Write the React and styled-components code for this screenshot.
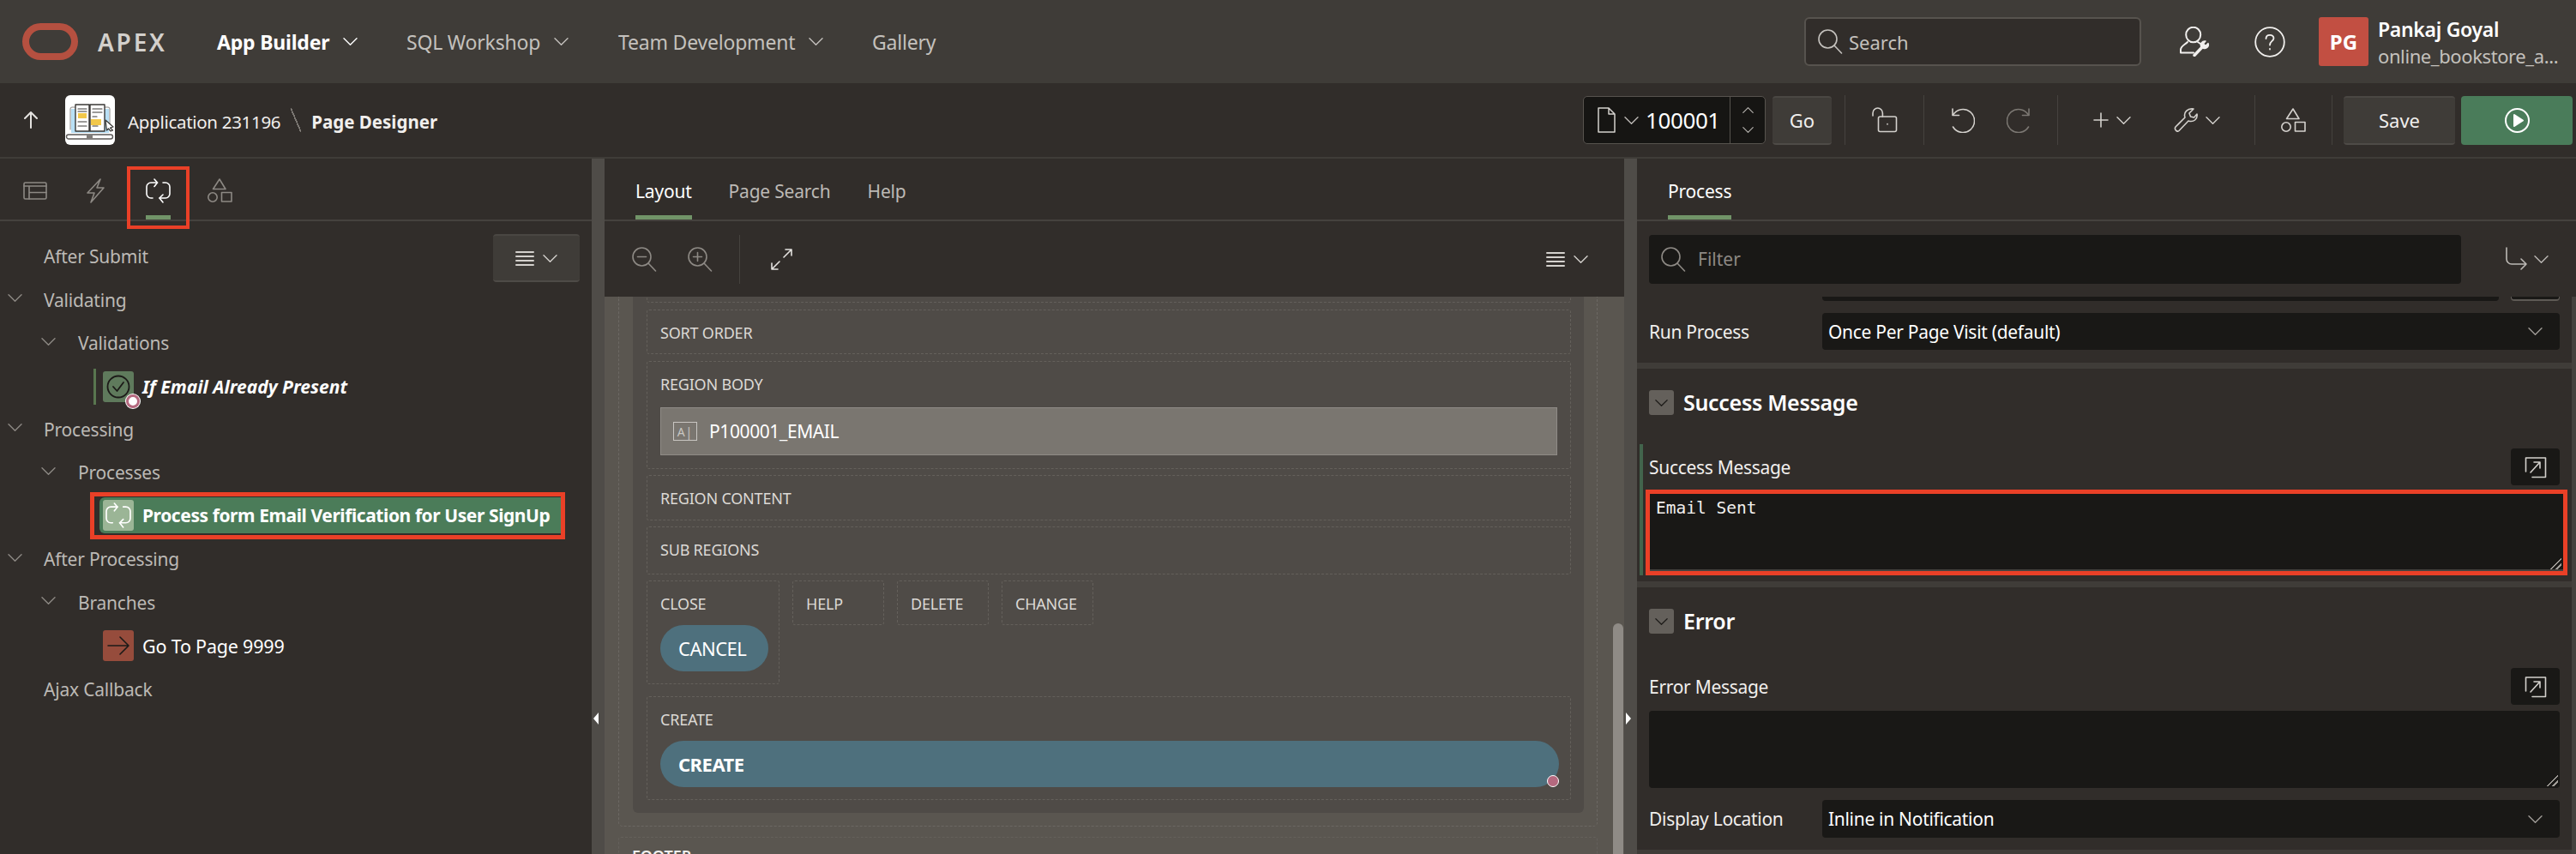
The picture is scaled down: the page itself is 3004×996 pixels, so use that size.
import React from "react";
import styled, { createGlobalStyle } from "styled-components";

const GlobalStyle = createGlobalStyle`
    html, body {
        margin: 0;
        padding: 0;
        background: #312d2a;
    }
    * {
        box-sizing: border-box;
    }
`;

const Svg = ({ w, h = w, vb = "0 0 32 32", sw = 1.6, children, ...rest }) => (
    <svg
        width={w}
        height={h}
        viewBox={vb}
        fill="none"
        stroke="currentColor"
        strokeWidth={sw}
        strokeLinecap="round"
        strokeLinejoin="round"
        style={{ flexShrink: 0, display: "block" }}
        {...rest}
    >
        {children}
    </svg>
);

const Chevron = ({ w = 17, h = 9, up }) => (
    <Svg w={w} h={h} vb="0 0 17 9" sw={1.4} preserveAspectRatio="none">
        <path d={up ? "M1 8.2 L8.5 .8 L16 8.2" : "M1 .8 L8.5 8.2 L16 .8"} />
    </Svg>
);

const SearchIcon = ({ w = 29, mark }) => (
    <Svg w={w} vb="0 0 29 29">
        <circle cx="11.5" cy="11.5" r="10.5" />
        <path d="M19 19 L27.5 28" />
        {mark === "minus" && <path d="M6.5 11.5 H16.5" />}
        {mark === "plus" && <path d="M6.5 11.5 H16.5 M11.5 6.5 V16.5" />}
    </Svg>
);

const ProcessIcon = ({ w = 29 }) => (
    <Svg w={w} vb="0 0 29 29">
        <path d="M13.5 5 H6 a5 5 0 0 0 -5 5 V18 a5 5 0 0 0 5 5 H8" />
        <path d="M10 1 L13.5 5 L10 9.5" />
        <path d="M20 5 H23 a5 5 0 0 1 5 5 V18 a5 5 0 0 1 -5 5 H16" />
        <path d="M20 19 L16 23 L20 28" />
    </Svg>
);

const ShapesIcon = () => (
    <Svg w={29} h={28} vb="0 0 29 28">
        <path d="M14 1 L21 12.5 H6.5 Z" />
        <circle cx="6" cy="22" r="5.2" />
        <rect x="16.5" y="16.5" width="11.5" height="10.5" />
    </Svg>
);

const LayoutIcon = () => (
    <Svg w={28} h={21} vb="0 0 28 21">
        <rect x="1" y="1" width="26" height="19" rx="1.5" />
        <path d="M1 5 H27 M7 5 V20 M7 12.5 H27" />
    </Svg>
);

const BoltIcon = () => (
    <Svg w={21} h={29} vb="0 0 21 29">
        <path d="M16 1 L1 17 H9 L5 28 L20 11 H12 Z" />
    </Svg>
);

const MenuIcon = () => (
    <Svg w={22} h={19} vb="0 0 22 19" sw={2}>
        <path d="M1 2 H21 M1 7 H21 M1 12 H21 M1 17 H21" />
    </Svg>
);

const ExpandBoxIcon = () => (
    <Svg w={26} h={26} vb="0 0 26 26">
        <path d="M1.5 18 V2 H24.5 V24.5 H9" />
        <path d="M7 19 L18 7 M11 7 H18 V14" />
    </Svg>
);

const ResizeGrip = styled.span`
    position: absolute;
    right: 2px;
    bottom: 2px;
    width: 13px;
    height: 13px;
    background: linear-gradient(
        135deg,
        transparent 48%,
        #a09c97 48%,
        #a09c97 56%,
        transparent 56%,
        transparent 72%,
        #a09c97 72%,
        #a09c97 82%,
        transparent 82%
    );
`;

const Page = styled.div`
    width: 3004px;
    height: 996px;
    overflow: hidden;
    display: flex;
    flex-direction: column;
    background: #312d2a;
    color: #f1efed;
    font-family: "Noto Sans", "Liberation Sans", sans-serif;
`;

const Header = styled.header`
    height: 97px;
    flex-shrink: 0;
    display: flex;
    align-items: center;
    padding: 0 19px 0 26px;
    background: #3f3c38;
`;

const Logo = styled.div`
    width: 65px;
    height: 43px;
    border: 8px solid #b55040;
    border-radius: 22px;
`;

const Brand = styled.span`
    margin: 0 58px 0 23px;
    width: 81px;
    font-size: 28px;
    font-weight: 600;
    letter-spacing: 2.8px;
    color: #d3d0cc;
`;

const NavItem = styled.div`
    width: ${(p) => p.$w}px;
    display: flex;
    align-items: center;
    gap: 16px;
    font-size: 23px;
    font-weight: ${(p) => (p.$active ? 700 : 400)};
    color: ${(p) => (p.$active ? "#ffffff" : "#c4c1bd")};
    white-space: nowrap;
    letter-spacing: -0.2px;
`;

const SearchBox = styled.div`
    margin-left: auto;
    width: 393px;
    height: 57px;
    display: flex;
    align-items: center;
    gap: 7px;
    padding-left: 14px;
    background: #312d2a;
    border: 2px solid #57534e;
    border-radius: 6px;
    color: #c4c1bd;
    font-size: 22px;
`;

const HeaderIcon = styled.div`
    margin-left: ${(p) => p.$ml}px;
    color: #f1efed;
`;

const Avatar = styled.div`
    margin-left: 39px;
    width: 58px;
    height: 57px;
    display: flex;
    align-items: center;
    justify-content: center;
    background: #c24f42;
    border-radius: 3px;
    color: #fff;
    font-size: 24px;
    font-weight: 700;
`;

const UserText = styled.div`
    margin-left: 11px;
    width: 212px;
    display: flex;
    flex-direction: column;
    gap: 4px;
    white-space: nowrap;
`;

const UserName = styled.span`
    font-size: 23px;
    font-weight: 600;
    line-height: 28px;
    color: #fff;
    letter-spacing: -0.3px;
`;

const UserSchema = styled.span`
    font-size: 22px;
    line-height: 26px;
    color: #c4c1bd;
    letter-spacing: -0.4px;
`;

const Toolbar = styled.div`
    height: 88px;
    flex-shrink: 0;
    display: flex;
    align-items: center;
    padding-right: 4px;
    border-bottom: 2px solid #3f3c38;
`;

const UpArrow = styled.div`
    margin-left: 27px;
    color: #e4e2df;
`;

const AppIcon = styled.div`
    margin-left: 31px;
    width: 58px;
    height: 58px;
    background: #fff;
    border-radius: 6px;
`;

const Crumb = styled.span`
    margin: 3px 0 0 ${(p) => p.$ml}px;
    font-size: 20.5px;
    font-weight: ${(p) => (p.$bold ? 700 : 400)};
    letter-spacing: ${(p) => (p.$bold ? "0" : "-0.3px")};
    color: #f1efed;
    white-space: nowrap;
`;

const CrumbSlash = styled.span`
    margin-left: 12px;
    width: 12px;
    height: 28px;
    background: linear-gradient(
        to bottom left,
        transparent 46%,
        #7c7873 46%,
        #7c7873 54%,
        transparent 54%
    );
`;

const PageSelect = styled.div`
    margin-left: auto;
    width: 213px;
    height: 56px;
    display: flex;
    align-items: center;
    background: #161513;
    border: 1px solid #57534e;
    border-radius: 5px;
    padding-left: 16px;
`;

const PageNumber = styled.span`
    margin-left: 8px;
    width: 98px;
    font-size: 26px;
    color: #fff;
    letter-spacing: -0.4px;
`;

const Stepper = styled.div`
    height: 100%;
    width: 41px;
    display: flex;
    flex-direction: column;
    align-items: center;
    justify-content: center;
    gap: 16px;
    color: #bcb9b5;
    border-left: 1px solid #57534e;
`;

const DocChevron = styled.span`
    margin-left: 10px;
    color: #bcb9b5;
`;

const Button = styled.button`
    width: ${(p) => p.$w}px;
    height: 57px;
    margin-left: ${(p) => p.$ml}px;
    padding: 0;
    background: #3f3c38;
    border: 0;
    border-bottom: 2px solid #4e4b47;
    border-top: 2px solid #4a4743;
    border-radius: 4px;
    color: #f1efed;
    font-family: inherit;
    font-size: 22px;
    display: flex;
    align-items: center;
    justify-content: center;
`;

const RunButton = styled(Button)`
    background: #4a7c5a;
    border: 0;
    color: #fff;
`;

const ToolGroup = styled.div`
    width: ${(p) => p.$w}px;
    height: 58px;
    margin-left: ${(p) => p.$ml || 0}px;
    display: flex;
    align-items: center;
    justify-content: center;
    gap: ${(p) => p.$gap || 0}px;
    border-left: 1px solid #45423e;
    border-right: ${(p) => (p.$end ? "1px solid #45423e" : "0")};
    color: #d4d1cd;
`;

const ToolIcon = styled.div`
    display: flex;
    align-items: center;
    gap: 9px;
    color: ${(p) => (p.$dim ? "#7c7873" : "#d4d1cd")};
`;

const Main = styled.main`
    flex: 1;
    min-height: 0;
    display: flex;
`;

const Splitter = styled.div`
    position: relative;
    width: 15px;
    flex-shrink: 0;
    background: #4f4c48;
`;

const Handle = styled.span`
    position: absolute;
    top: 646px;
    left: 2px;
    border-top: 7px solid transparent;
    border-bottom: 7px solid transparent;
    ${(p) =>
        p.$right
            ? "border-left: 6px solid #fff;"
            : "border-right: 6px solid #fff;"}
`;

const Panel = styled.section`
    width: ${(p) => p.$w}px;
    flex-shrink: 0;
    display: flex;
    flex-direction: column;
    min-height: 0;
    background: #312d2a;
`;

const TabBar = styled.div`
    position: relative;
    height: 73px;
    flex-shrink: 0;
    display: flex;
    align-items: center;
    padding-left: ${(p) => p.$pl}px;
    gap: ${(p) => p.$gap || 0}px;
    border-bottom: 2px solid #45423e;
`;

const IconTab = styled.div`
    position: relative;
    width: ${(p) => p.$w}px;
    height: 100%;
    margin-left: ${(p) => p.$ml || 0}px;
    display: flex;
    align-items: center;
    justify-content: center;
    padding-top: 3px;
    color: ${(p) => (p.$active ? "#fff" : "#8d8984")};
    ${(p) =>
        p.$active &&
        `&::after {
            content: "";
            position: absolute;
            left: 0;
            right: 0;
            bottom: 0;
            height: 5px;
            background: #719468;
        }`}
`;

const OutlineBox = styled.div`
    position: absolute;
    left: 148px;
    top: 9px;
    width: 73px;
    height: 73px;
    border: 4px solid #ea4027;
`;

const TextTab = styled.div`
    height: 100%;
    display: flex;
    align-items: center;
    padding-top: 5px;
    font-size: 21px;
    white-space: nowrap;
    letter-spacing: -0.2px;
    color: ${(p) => (p.$active ? "#fff" : "#bcb9b5")};
    box-shadow: ${(p) => (p.$active ? "inset 0 -5px 0 #719468" : "none")};
`;

const Tree = styled.div`
    padding-top: 16px;
`;

const TreeRow = styled.div`
    height: 50.45px;
    display: flex;
    align-items: center;
    padding-left: ${(p) => p.$pl}px;
    padding-right: 14px;
    font-size: 21px;
    letter-spacing: -0.2px;
    color: #bcb9b5;
    white-space: nowrap;
`;

const Twisty = styled.span`
    width: ${(p) => p.$w || 42}px;
    flex-shrink: 0;
    color: #8d8984;
    padding-bottom: 4px;
`;

const LeafName = styled.span`
    margin-left: 10px;
    font-size: ${(p) => (p.$strong ? 21 : 21.5)}px;
    letter-spacing: ${(p) =>
        p.$strong && !p.$italic ? "-0.42px" : p.$italic ? "0" : "-0.2px"};
    color: #fff;
    font-weight: ${(p) => (p.$strong ? 700 : 400)};
    font-style: ${(p) => (p.$italic ? "italic" : "normal")};
`;

const NodeIcon = styled.span`
    position: relative;
    width: 36px;
    height: 36px;
    flex-shrink: 0;
    display: flex;
    align-items: center;
    justify-content: center;
    border-radius: 3px;
    background: ${(p) => p.$bg};
    color: ${(p) => p.$fg};
`;

const ModMark = styled.span`
    width: 3px;
    height: 42px;
    margin: 0 8px 0 -11px;
    background: #59764f;
`;

const ErrorDot = styled.span`
    position: absolute;
    right: -7px;
    bottom: -7px;
    width: 16px;
    height: 16px;
    border-radius: 50%;
    background: #fff;
    border: 3px solid #b5697f;
    box-shadow: 0 0 0 1px #fff;
`;

const SelectedFrame = styled.div`
    width: 554px;
    height: 55px;
    margin: -2.3px 0 -2.3px 105px;
    border: 5px solid #ea4027;
    display: flex;
`;

const SelectedRow = styled.div`
    flex: 1;
    height: 42px;
    margin: 1px 0 0 6px;
    padding-left: 4px;
    display: flex;
    align-items: center;
    background: #4b7c59;
    border-radius: 6px 0 0 6px;
`;

const MenuButton = styled(Button)`
    margin-left: auto;
    margin-top: 4px;
    width: 101px;
    height: 56px;
    gap: 10px;
    color: #d4d1cd;
    flex-shrink: 0;
`;

const ZoomBar = styled.div`
    height: 88px;
    flex-shrink: 0;
    display: flex;
    align-items: center;
    padding: 0 42px 0 32px;
    color: #8d8984;
`;

const ZoomGap = styled.span`
    width: 36px;
`;

const BarSep = styled.span`
    width: 1px;
    height: 57px;
    margin: 0 36px 0 31px;
    background: #45423e;
`;

const BarMenu = styled.div`
    margin-left: auto;
    display: flex;
    align-items: center;
    gap: 10px;
    color: #d4d1cd;
`;

const Canvas = styled.div`
    position: relative;
    flex: 1;
    min-height: 0;
    overflow: hidden;
    background: #5a5650;
    padding-left: 16px;
`;

const Scrollbar = styled.span`
    position: absolute;
    right: 1px;
    top: 381px;
    width: 12px;
    height: 300px;
    border-radius: 6px 6px 0 0;
    background: #8f8b86;
`;

const Dropzone = styled.div`
    width: 1142px;
    height: 618px;
    padding: 0 16px;
    border: 1px dashed #6c6863;
    border-top: 0;
    border-radius: 0 0 5px 5px;
`;

const InnerRegion = styled.div`
    width: 1109px;
    height: 602px;
    padding: 0 15px 0 16px;
    background: #4f4b47;
    border-radius: 0 0 6px 6px;
`;

const Slot = styled.div`
    position: relative;
    height: ${(p) => p.$h}px;
    width: ${(p) => (p.$w ? `${p.$w}px` : "auto")};
    margin-bottom: ${(p) => p.$mb ?? 7}px;
    padding: 0 15px;
    border: 1px dashed #64605b;
    border-top-style: ${(p) => (p.$clip ? "none" : "dashed")};
    border-radius: 3px;
    flex-shrink: 0;
`;

const SlotLabel = styled.div`
    height: 51px;
    display: flex;
    align-items: center;
    font-size: 18px;
    color: #dcd9d5;
    white-space: nowrap;
    letter-spacing: -0.2px;
`;

const SlotRow = styled.div`
    display: flex;
    align-items: flex-start;
    gap: 15px;
    margin-bottom: 14px;
`;

const PageItem = styled.div`
    height: 56px;
    margin-top: 2px;
    display: flex;
    align-items: center;
    gap: 14px;
    padding-left: 14px;
    background: #7a7670;
    border: 1px solid #8f8b86;
    color: #fff;
    font-size: 21px;
    letter-spacing: -0.4px;
`;

const ItemGlyph = styled.span`
    width: 28px;
    height: 22px;
    display: flex;
    align-items: center;
    justify-content: center;
    border: 1px solid #c9c6c2;
    color: #c9c6c2;
    font-size: 14px;
    letter-spacing: 1px;
`;

const PillButton = styled.div`
    position: relative;
    height: 54px;
    width: ${(p) => (p.$w ? `${p.$w}px` : "auto")};
    margin-right: ${(p) => (p.$w ? "0" : "-2px")};
    display: flex;
    align-items: center;
    padding-left: 21px;
    border-radius: 27px;
    background: #4e707d;
    color: #fff;
    font-size: 22px;
    font-weight: ${(p) => (p.$bold ? 700 : 400)};
    letter-spacing: -0.5px;
`;

const PinkDot = styled.span`
    position: absolute;
    right: 0;
    bottom: 0;
    width: 14px;
    height: 14px;
    border-radius: 50%;
    background: #b5697f;
    border: 1px solid #fff;
`;

const FooterSlot = styled(Slot)`
    margin: 12px 0 0;
    width: 1142px;
    height: 40px;
    padding: 9px 15px 0;
    font-size: 18px;
    font-weight: 600;
    color: #f1efed;
`;

const FilterBar = styled.div`
    height: 88px;
    flex-shrink: 0;
    display: flex;
    align-items: center;
    padding: 0 32px 0 14px;
`;

const FilterBox = styled.div`
    width: 947px;
    height: 57px;
    display: flex;
    align-items: center;
    gap: 14px;
    padding-left: 14px;
    background: #191816;
    border-radius: 4px;
    color: #8d8984;
    font-size: 21px;
`;

const GoToButton = styled.div`
    margin-left: auto;
    display: flex;
    align-items: center;
    gap: 8px;
    color: #bcb9b5;
`;

const Props = styled.div`
    flex: 1;
    min-height: 0;
    overflow: hidden;
    border-right: 5px solid #45423e;
`;

const Row = styled.div`
    display: flex;
    align-items: center;
    padding: 0 14px;
    margin-top: ${(p) => p.$mt || 0}px;
`;

const PartialField = styled.div`
    height: 5px;
    width: 789px;
    margin-left: 202px;
    background: #191816;
    border-radius: 0 0 4px 4px;
`;

const PartialBtn = styled.div`
    height: 5px;
    width: 57px;
    margin-left: 14px;
    background: #191816;
    border-bottom: 2px solid #5e5a55;
    border-left: 1px solid #5e5a55;
    border-right: 1px solid #5e5a55;
    border-radius: 0 0 4px 4px;
`;

const PropLabel = styled.span`
    width: ${(p) => (p.$w ? `${p.$w}px` : "auto")};
    flex-shrink: 0;
    font-size: 21px;
    letter-spacing: -0.3px;
    color: #f1efed;
    white-space: nowrap;
`;

const SelectField = styled.div`
    width: 860px;
    height: ${(p) => p.$h}px;
    display: flex;
    align-items: center;
    justify-content: space-between;
    padding: 0 20px 0 7px;
    background: #191816;
    border-radius: 4px;
    color: #fff;
    font-size: 21px;
    letter-spacing: -0.3px;
    svg {
        color: #a09c97;
    }
`;

const Band = styled.div`
    height: ${(p) => p.$h || 7}px;
    margin-top: ${(p) => p.$mt}px;
    background: #3f3c38;
`;

const SectionHead = styled.div`
    display: flex;
    align-items: center;
    gap: 11px;
    padding: 25px 14px 0;
    font-size: 25px;
    line-height: 29px;
    font-weight: 600;
    letter-spacing: -0.3px;
    color: #fff;
`;

const Toggle = styled.span`
    width: 29px;
    height: 29px;
    display: flex;
    align-items: center;
    justify-content: center;
    border-radius: 3px;
    background: #64605b;
    color: #1e1c1a;
`;

const SquareBtn = styled.div`
    width: 57px;
    height: 43px;
    display: flex;
    align-items: center;
    justify-content: center;
    margin-left: auto;
    background: #191816;
    border-radius: 4px;
    color: #d4d1cd;
`;

const ChangedField = styled.div`
    margin: 34px 0 0 3px;
    padding: 5px 0 0 7px;
    border-left: 4px solid #42644c;
`;

const LabelRow = styled.div`
    display: flex;
    align-items: center;
    padding-right: 14px;
`;

const RedFrame = styled.div`
    margin: 5px 5px 0 -4px;
    height: 100px;
    border: 5px solid #ea4027;
    background: #191816;
    position: relative;
    padding: 5px 7px;
    box-shadow: inset 0 -2px 0 #45423e;
`;

const MonoText = styled.span`
    font-family: "DejaVu Sans Mono", "Liberation Mono", monospace;
    font-size: 19.5px;
    line-height: 24px;
    color: #f1efed;
`;

const TextArea = styled.div`
    position: relative;
    height: 90px;
    margin: 7px 14px 0;
    background: #191816;
    border-radius: 4px;
`;

export default function App() {
    return (
        <Page>
            <GlobalStyle />
            <Header>
                <Logo />
                <Brand>APEX</Brand>
                <NavItem $w={221} $active>
                    App Builder <Chevron />
                </NavItem>
                <NavItem $w={247}>
                    SQL Workshop <Chevron />
                </NavItem>
                <NavItem $w={296}>
                    Team Development <Chevron />
                </NavItem>
                <NavItem $w={100}>Gallery</NavItem>
                <SearchBox>
                    <SearchIcon />
                    Search
                </SearchBox>
                <HeaderIcon $ml={45}>
                    <Svg w={37} h={35} vb="0 0 37 35" sw={2}>
                        <ellipse cx="15.7" cy="9.5" rx="8.5" ry="8.8" />
                        <path d="M9 18 C6 21 1 23 1 27 V30.5 H16" />
                        <path d="M21 18 L24 20" />
                        <path d="M17 33.5 L27 23" strokeWidth="3.4" />
                        <path
                            d="M25 24 C23 20 26 16.5 30 17 L27.5 20 L30 22.5 L33 19.5 C34.5 23 31 27 27 25 Z"
                            fill="currentColor"
                            strokeWidth="1.4"
                        />
                    </Svg>
                </HeaderIcon>
                <HeaderIcon $ml={50}>
                    <Svg w={36} vb="0 0 36 36" sw={1.8}>
                        <circle cx="18" cy="18" r="16.8" />
                        <path d="M13.5 14 C13.5 8.5 22.5 8.5 22.5 13.5 C22.5 17 18 17 18 21.5" />
                        <path d="M18 26 v.5" />
                    </Svg>
                </HeaderIcon>
                <Avatar>PG</Avatar>
                <UserText>
                    <UserName>Pankaj Goyal</UserName>
                    <UserSchema>online_bookstore_a...</UserSchema>
                </UserText>
            </Header>

            <Toolbar>
                <UpArrow>
                    <Svg w={18} h={20} vb="0 0 18 20" sw={2}>
                        <path d="M9 19 V2 M2 8 L9 1 L16 8" />
                    </Svg>
                </UpArrow>
                <AppIcon>
                    <Svg w={58} vb="0 0 58 58" sw={1} color="#3a3836">
                        <path d="M6 40 V16 a2 2 0 0 1 2 -2 H50 a2 2 0 0 1 2 2 V40" stroke="#8a8785" />
                        <rect x="7" y="16" width="44" height="28" fill="#b8dff5" stroke="none" />
                        <path d="M12 11 H28 V42 H12 Z M29 11 H46 V42 H29 Z" fill="#fff" strokeWidth="1.4" />
                        <path d="M15 16 H25 M15 19 H25 M15 31 H25 M15 36 H25 M32 16 H43 M32 20 H43 M32 25 H37 M32 36 H38" strokeWidth="1.2" />
                        <rect x="15" y="21" width="10" height="6" fill="#f2c84b" stroke="none" />
                        <rect x="30" y="28" width="12" height="7" fill="#f2c84b" stroke="none" />
                        <rect x="1.5" y="46" width="54" height="5" rx="2.5" fill="#fff" stroke="#5c5a58" strokeWidth="1.4" />
                        <rect x="25" y="46.5" width="7" height="4" fill="#7d7a78" stroke="none" />
                        <path d="M47 29 L56 37 L52.5 38 L55.5 41 L53 42 L50.5 39 L48.5 41 Z" fill="#fff" strokeWidth="1.2" />
                    </Svg>
                </AppIcon>
                <Crumb $ml={15}>Application 231196</Crumb>
                <CrumbSlash />
                <Crumb $bold $ml={12}>
                    Page Designer
                </Crumb>

                <PageSelect>
                    <Svg w={21} h={30} vb="0 0 21 30" sw={1.5} color="#d4d1cd">
                        <path d="M1 1 H13 L20 8 V29 H1 Z M13 1 V8 H20" />
                    </Svg>
                    <DocChevron>
                        <Chevron />
                    </DocChevron>
                    <PageNumber>100001</PageNumber>
                    <Stepper>
                        <Chevron w={13} h={7} up />
                        <Chevron w={13} h={7} />
                    </Stepper>
                </PageSelect>
                <Button $w={69} $ml={8}>
                    Go
                </Button>
                <ToolGroup $w={92} $ml={15}>
                    <ToolIcon>
                        <Svg w={30} vb="0 0 30 30">
                            <rect x="7.5" y="11" width="21" height="17.5" rx="2" />
                            <path d="M1 10 V7 a5.7 6 0 0 1 11.4 0 V11" />
                            <path d="M18 19.5 v.5" />
                        </Svg>
                    </ToolIcon>
                </ToolGroup>
                <ToolGroup $w={156} $gap={37}>
                    <ToolIcon>
                        <Svg w={27} h={30} vb="0 0 27 30">
                            <path d="M1.5 9 A13.5 13.5 0 1 1 1.5 23" />
                            <path d="M1 2 V9.5 H8.5" />
                        </Svg>
                    </ToolIcon>
                    <ToolIcon $dim>
                        <Svg w={27} h={30} vb="0 0 27 30">
                            <path d="M25.5 9 A13.5 13.5 0 1 0 25.5 23" />
                            <path d="M26 2 V9.5 H18.5" />
                        </Svg>
                    </ToolIcon>
                </ToolGroup>
                <ToolGroup $w={230} $gap={50}>
                    <ToolIcon>
                        <Svg w={18} vb="0 0 18 18">
                            <path d="M9 1 V17 M1 9 H17" />
                        </Svg>
                        <Chevron />
                    </ToolIcon>
                    <ToolIcon>
                        <Svg w={28} vb="0 0 28 28">
                            <path d="M2 22 L13 11 C11 5 16 0 23 1 L18 6 L19.5 10 L23.5 11 L27 7 C28 13 23 17 17 15 L6 26.5 C4 28.5 0 25 2 22 Z" />
                        </Svg>
                        <Chevron />
                    </ToolIcon>
                </ToolGroup>
                <ToolGroup $w={91} $end>
                    <ShapesIcon />
                </ToolGroup>
                <Button $w={130} $ml={13}>
                    Save
                </Button>
                <RunButton $w={130} $ml={7}>
                    <Svg w={29} vb="0 0 29 29" sw={2}>
                        <circle cx="14.5" cy="14.5" r="13.5" />
                        <path d="M11 8 L21 14.5 L11 21 Z" fill="currentColor" />
                    </Svg>
                </RunButton>
            </Toolbar>

            <Main>
                <Panel $w={690}>
                    <TabBar $pl={27}>
                        <IconTab $w={28}>
                            <LayoutIcon />
                        </IconTab>
                        <IconTab $w={21} $ml={46}>
                            <BoltIcon />
                        </IconTab>
                        <IconTab $w={29} $ml={48} $active>
                            <ProcessIcon />
                        </IconTab>
                        <IconTab $w={29} $ml={43}>
                            <ShapesIcon />
                        </IconTab>
                        <OutlineBox />
                    </TabBar>
                    <Tree>
                        <TreeRow $pl={51}>
                            After Submit
                            <MenuButton $w={101}>
                                <MenuIcon />
                                <Chevron />
                            </MenuButton>
                        </TreeRow>
                        <TreeRow $pl={9}>
                            <Twisty><Chevron /></Twisty>
                            Validating
                        </TreeRow>
                        <TreeRow $pl={48}>
                            <Twisty $w={43}><Chevron /></Twisty>
                            Validations
                        </TreeRow>
                        <TreeRow $pl={120}>
                            <ModMark />
                            <NodeIcon $bg="#5f7a5c" $fg="#1c1a18">
                                <Svg w={28} vb="0 0 28 28" sw={1.8}>
                                    <circle cx="14" cy="14" r="12.5" />
                                    <path d="M8 14 L12.5 19 L20 9" />
                                </Svg>
                                <ErrorDot />
                            </NodeIcon>
                            <LeafName $strong $italic>
                                If Email Already Present
                            </LeafName>
                        </TreeRow>
                        <TreeRow $pl={9}>
                            <Twisty><Chevron /></Twisty>
                            Processing
                        </TreeRow>
                        <TreeRow $pl={48}>
                            <Twisty $w={43}><Chevron /></Twisty>
                            Processes
                        </TreeRow>
                        <SelectedFrame>
                            <SelectedRow>
                                <NodeIcon $bg="#9bb596" $fg="#fff">
                                    <ProcessIcon w={30} />
                                </NodeIcon>
                                <LeafName $strong>
                                    Process form Email Verification for User SignUp
                                </LeafName>
                            </SelectedRow>
                        </SelectedFrame>
                        <TreeRow $pl={9}>
                            <Twisty><Chevron /></Twisty>
                            After Processing
                        </TreeRow>
                        <TreeRow $pl={48}>
                            <Twisty $w={43}><Chevron /></Twisty>
                            Branches
                        </TreeRow>
                        <TreeRow $pl={120}>
                            <NodeIcon $bg="#964c3c" $fg="#1c1a18">
                                <Svg w={26} vb="0 0 26 26">
                                    <path d="M1 13 H25 M15 3 L25 13 L15 23" />
                                </Svg>
                            </NodeIcon>
                            <LeafName>Go To Page 9999</LeafName>
                        </TreeRow>
                        <TreeRow $pl={51}>Ajax Callback</TreeRow>
                    </Tree>
                </Panel>

                <Splitter>
                    <Handle />
                </Splitter>

                <Panel $w={1189}>
                    <TabBar $pl={36} $gap={43}>
                        <TextTab $active>Layout</TextTab>
                        <TextTab>Page Search</TextTab>
                        <TextTab>Help</TextTab>
                    </TabBar>
                    <ZoomBar>
                        <SearchIcon mark="minus" />
                        <ZoomGap />
                        <SearchIcon mark="plus" />
                        <BarSep />
                        <Svg w={25} vb="0 0 25 25" color="#e4e2df">
                            <path d="M1 24 L10 15 M15 10 L24 1 M17 1 H24 V8 M1 17 V24 H8" />
                        </Svg>
                        <BarMenu>
                            <MenuIcon />
                            <Chevron />
                        </BarMenu>
                    </ZoomBar>
                    <Canvas>
                        <Dropzone>
                            <InnerRegion>
                                <Slot $h={7} $clip $mb={8} />
                                <Slot $h={52} $mb={8}>
                                    <SlotLabel>SORT ORDER</SlotLabel>
                                </Slot>
                                <Slot $h={126}>
                                    <SlotLabel>REGION BODY</SlotLabel>
                                    <PageItem>
                                        <ItemGlyph>A|</ItemGlyph>
                                        P100001_EMAIL
                                    </PageItem>
                                </Slot>
                                <Slot $h={53}>
                                    <SlotLabel>REGION CONTENT</SlotLabel>
                                </Slot>
                                <Slot $h={56}>
                                    <SlotLabel>SUB REGIONS</SlotLabel>
                                </Slot>
                                <SlotRow>
                                    <Slot $h={121} $w={155} $mb={0}>
                                        <SlotLabel>CLOSE</SlotLabel>
                                        <PillButton $w={126}>CANCEL</PillButton>
                                    </Slot>
                                    <Slot $h={52} $w={107} $mb={0}>
                                        <SlotLabel>HELP</SlotLabel>
                                    </Slot>
                                    <Slot $h={52} $w={107} $mb={0}>
                                        <SlotLabel>DELETE</SlotLabel>
                                    </Slot>
                                    <Slot $h={52} $w={107} $mb={0}>
                                        <SlotLabel>CHANGE</SlotLabel>
                                    </Slot>
                                </SlotRow>
                                <Slot $h={121} $mb={0}>
                                    <SlotLabel>CREATE</SlotLabel>
                                    <PillButton $bold>
                                        CREATE
                                        <PinkDot />
                                    </PillButton>
                                </Slot>
                            </InnerRegion>
                        </Dropzone>
                        <FooterSlot $h={40}>FOOTER</FooterSlot>
                        <Scrollbar />
                    </Canvas>
                </Panel>

                <Splitter>
                    <Handle $right />
                </Splitter>

                <Panel $w={1095}>
                    <TabBar $pl={36}>
                        <TextTab $active>Process</TextTab>
                    </TabBar>
                    <FilterBar>
                        <FilterBox>
                            <SearchIcon />
                            Filter
                        </FilterBox>
                        <GoToButton>
                            <Svg w={26} h={28} vb="0 0 26 28">
                                <path d="M2 1 V14 a6 6 0 0 0 6 6 H25 M19 14 L25 20 L19 26" />
                            </Svg>
                            <Chevron />
                        </GoToButton>
                    </FilterBar>
                    <Props>
                        <Row>
                            <PartialField />
                            <PartialBtn />
                        </Row>
                        <Row $mt={14}>
                            <PropLabel $w={202}>Run Process</PropLabel>
                            <SelectField $h={43}>
                                Once Per Page Visit (default)
                                <Chevron />
                            </SelectField>
                        </Row>
                        <Band $mt={15} />
                        <SectionHead>
                            <Toggle><Chevron w={15} h={8} /></Toggle>
                            Success Message
                        </SectionHead>
                        <ChangedField>
                            <LabelRow>
                                <PropLabel>Success Message</PropLabel>
                                <SquareBtn><ExpandBoxIcon /></SquareBtn>
                            </LabelRow>
                            <RedFrame>
                                <MonoText>Email Sent</MonoText>
                                <ResizeGrip />
                            </RedFrame>
                        </ChangedField>
                        <Band $mt={7} />
                        <SectionHead>
                            <Toggle><Chevron w={15} h={8} /></Toggle>
                            Error
                        </SectionHead>
                        <Row $mt={40}>
                            <PropLabel>Error Message</PropLabel>
                            <SquareBtn><ExpandBoxIcon /></SquareBtn>
                        </Row>
                        <TextArea>
                            <ResizeGrip />
                        </TextArea>
                        <Row $mt={14}>
                            <PropLabel $w={202}>Display Location</PropLabel>
                            <SelectField $h={44}>
                                Inline in Notification
                                <Chevron />
                            </SelectField>
                        </Row>
                        <Band $mt={14} />
                    </Props>
                </Panel>
            </Main>
        </Page>
    );
}
